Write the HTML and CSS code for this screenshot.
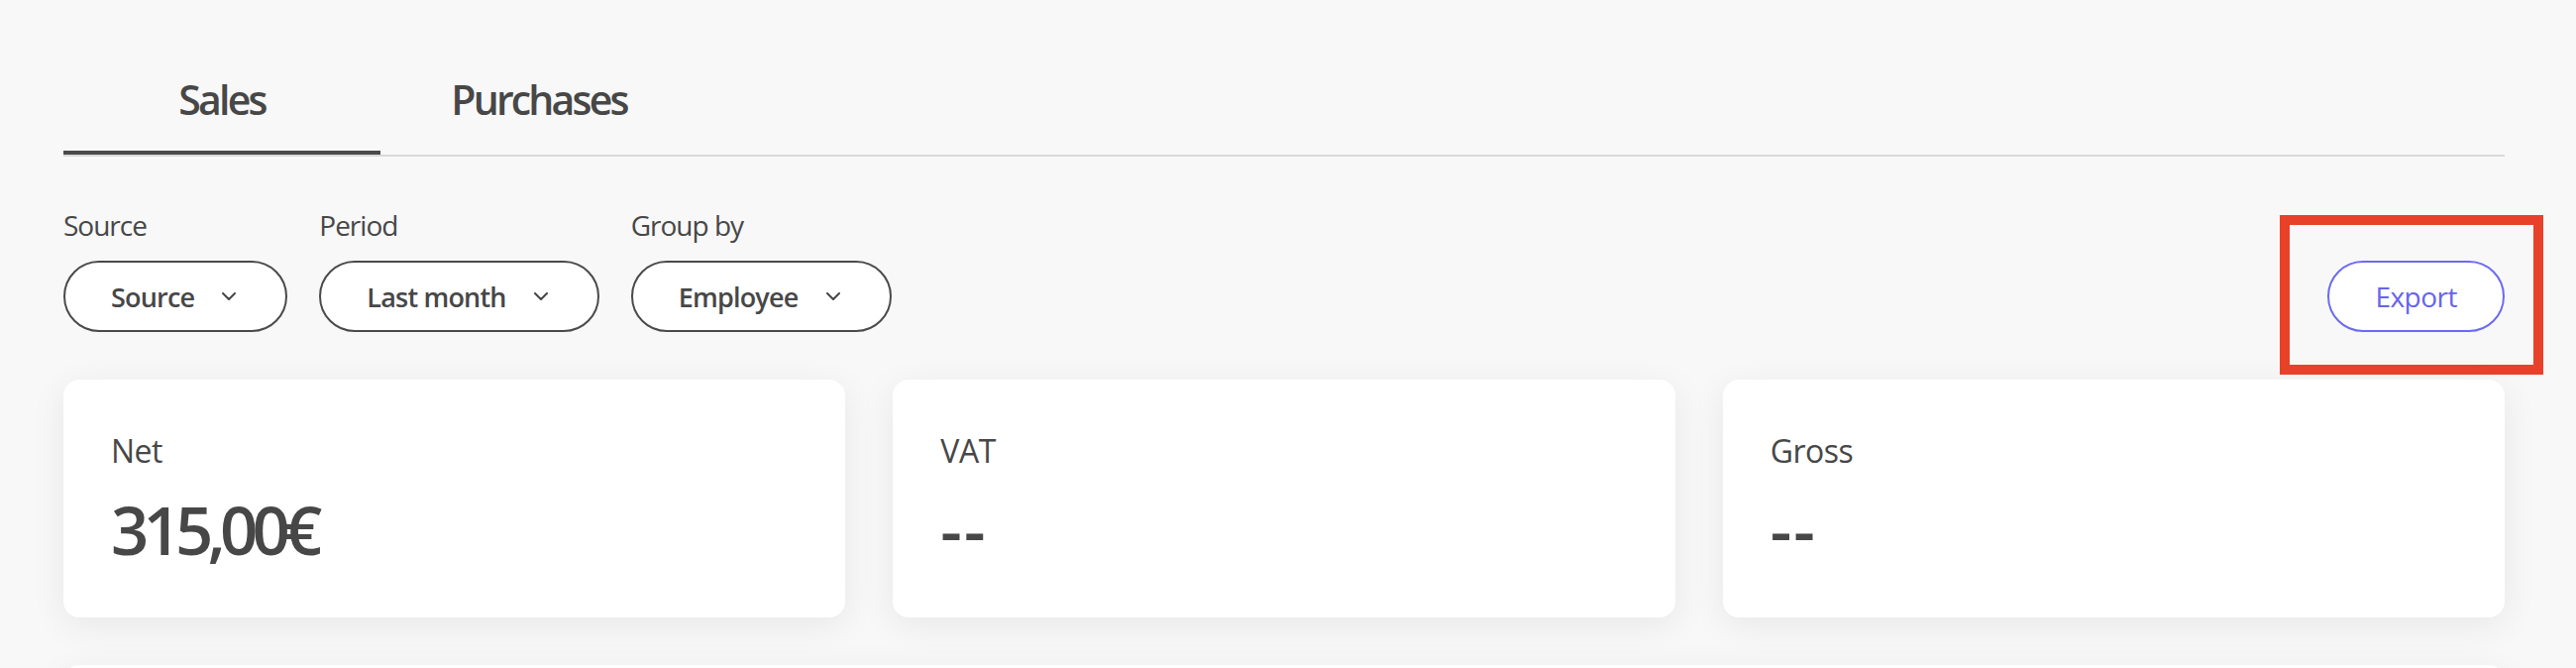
FILE: index.html
```html
<!DOCTYPE html>
<html lang="en">
<head>
<meta charset="UTF-8">
<meta name="viewport" content="width=device-width, initial-scale=1.0">
<title>Reports</title>
<link rel="stylesheet" href="styles.css">
</head>
<body>
<div class="page">
    <nav class="tabs">
        <div class="tab active">Sales</div>
        <div class="tab">Purchases</div>
    </nav>

    <div class="toolbar">
        <div class="filters">
            <div class="filter">
                <label>Source</label>
                <button class="select">Source
                    <svg width="14" height="8" viewBox="0 0 14 8"><polyline points="1,1 7,7 13,1"/></svg>
                </button>
            </div>
            <div class="filter">
                <label>Period</label>
                <button class="select">Last month
                    <svg width="14" height="8" viewBox="0 0 14 8"><polyline points="1,1 7,7 13,1"/></svg>
                </button>
            </div>
            <div class="filter">
                <label>Group by</label>
                <button class="select">Employee
                    <svg width="14" height="8" viewBox="0 0 14 8"><polyline points="1,1 7,7 13,1"/></svg>
                </button>
            </div>
        </div>
        <button class="export">Export</button>
    </div>

    <div class="cards">
        <div class="card">
            <div class="card-label">Net</div>
            <div class="card-value">315,00€</div>
        </div>
        <div class="card">
            <div class="card-label">VAT</div>
            <div class="card-value empty">--</div>
        </div>
        <div class="card">
            <div class="card-label">Gross</div>
            <div class="card-value empty">--</div>
        </div>
    </div>

    <div class="panel"></div>
</div>

<div class="highlight"></div>
</body>
</html>
```

FILE: styles.css
```css
body {
    font-family: "Open Sans", "Noto Sans", sans-serif;
    margin: 0;
    padding: 0;
    background-color: #f8f8f8;
    color: #474747;
    overflow: hidden;
}
.page {
    padding: 48px 72px 0 64px;
}
.tabs {
    display: flex;
    border-bottom: 2px solid #d9d9d9;
}
.tab {
    width: 320px;
    height: 104px;
    display: flex;
    align-items: center;
    justify-content: center;
    font-size: 41px;
    font-weight: 600;
    letter-spacing: -2.8px;
    border-bottom: 4px solid transparent;
}
.tab.active {
    border-bottom-color: #4a4a4a;
}
.toolbar {
    display: flex;
    justify-content: space-between;
    align-items: flex-end;
    margin-top: 50px;
}
.filters {
    display: flex;
    gap: 32px;
}
.filter label {
    display: block;
    font-size: 28px;
    line-height: 38px;
    margin-bottom: 17px;
    letter-spacing: -1px;
}
.select {
    display: flex;
    align-items: center;
    gap: 28px;
    height: 72px;
    box-sizing: border-box;
    padding: 0 50px 0 46px;
    background-color: #fff;
    border: 2px solid #4a4a4a;
    border-radius: 36px;
    font-family: inherit;
    font-size: 27px;
    font-weight: 600;
    letter-spacing: -0.8px;
    color: #474747;
}
.select svg {
    fill: none;
    stroke: #474747;
    stroke-width: 2;
    stroke-linecap: round;
    stroke-linejoin: round;
}
.export {
    height: 72px;
    box-sizing: border-box;
    padding: 0 46px;
    background-color: #fff;
    border: 2px solid #6c6af2;
    border-radius: 36px;
    font-family: inherit;
    font-size: 28px;
    letter-spacing: -0.5px;
    color: #6664ee;
}
.cards {
    display: grid;
    grid-template-columns: repeat(3, 1fr);
    gap: 48px;
    margin-top: 48px;
}
.card {
    height: 240px;
    box-sizing: border-box;
    padding: 50px 48px;
    background-color: #fff;
    border-radius: 16px;
    box-shadow: 0 8px 36px rgba(0, 0, 0, 0.07);
}
.card-label {
    font-size: 32px;
    line-height: 44px;
    letter-spacing: -0.5px;
}
.card-value {
    margin-top: 15px;
    font-size: 67px;
    line-height: 84px;
    font-weight: 600;
    letter-spacing: -5.8px;
}
.card-value.empty {
    letter-spacing: 2px;
}
.panel {
    height: 300px;
    margin-top: 48px;
    background-color: #fff;
    border-radius: 16px;
    box-shadow: 0 8px 36px rgba(0, 0, 0, 0.07);
}
.highlight {
    position: absolute;
    left: 2301px;
    top: 217px;
    width: 266px;
    height: 161px;
    box-sizing: border-box;
    border: 10px solid #e8412a;
}
```
